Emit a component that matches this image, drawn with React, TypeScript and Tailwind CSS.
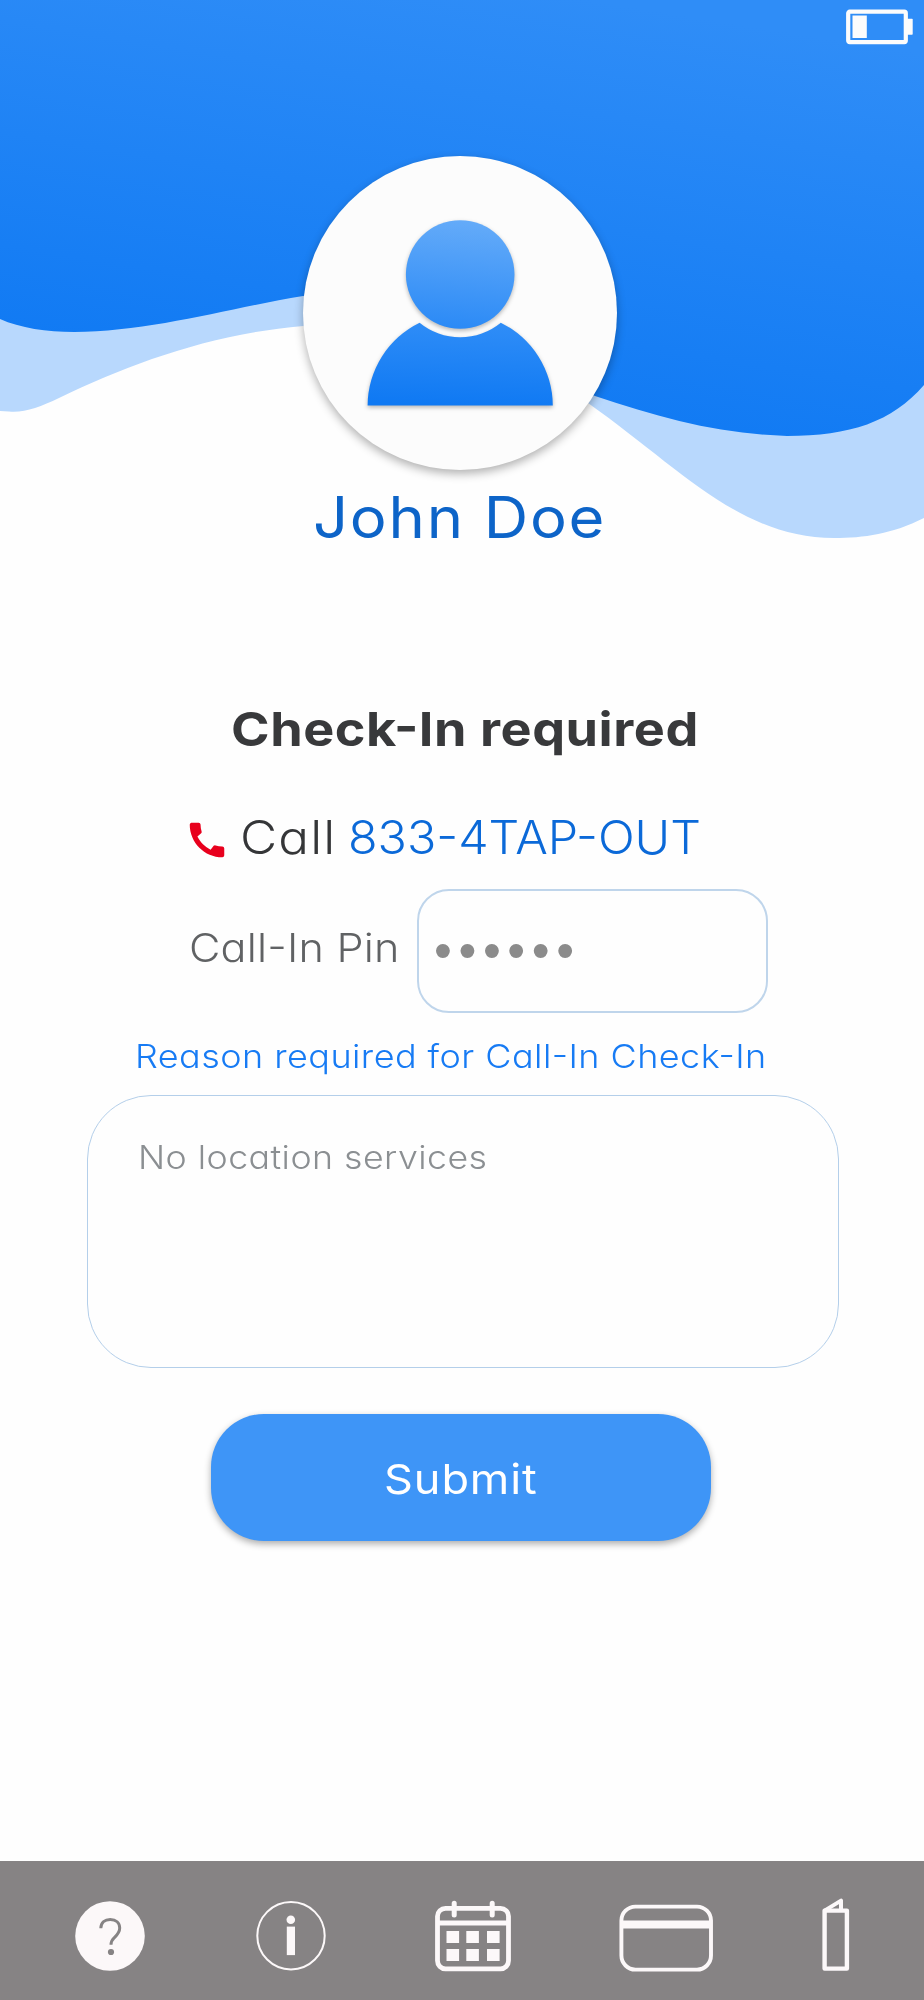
import React from "react";
import { MdCall } from "react-icons/md";

const PIN = "••••••";

function Waves() {
  return (
    <svg className="absolute inset-0 w-full h-full" viewBox="0 0 924 560" fill="none">
      <defs>
        <linearGradient id="wave" x1="500" y1="-14" x2="430" y2="425" gradientUnits="userSpaceOnUse">
          <stop offset="0" stopColor="#2f8df7" />
          <stop offset="1" stopColor="#0f79f3" />
        </linearGradient>
      </defs>
      <path
        d="M0 0H924V518C892 534 864 538 834 538C740 538 680 468 588 403L303 326C210 334 130 364 59 398C40 407 24 413 9 411.5L0 411Z"
        fill="#b8d8fd"
      />
      <path
        d="M0 0H924V385C892 422 850 436 787 436C720 434 660 418 595 396C520 366 430 280 303 296C230 308 150 332 74 332C47 332 20 328 0 319Z"
        fill="url(#wave)"
      />
    </svg>
  );
}

function Battery() {
  return (
    <svg className="absolute left-[846px] top-[9px] w-[67px] h-[36px]" viewBox="0 0 67 36">
      <rect x="2.2" y="2.7" width="57.6" height="30.4" rx="1.5" fill="none" stroke="#fcfcfc" strokeWidth="4.2" />
      <rect x="6.5" y="6.5" width="14.3" height="22.5" fill="#fcfcfc" />
      <path d="M61 9.8h5q.7 0 .7.7v14.6q0 .7-.7.7h-5z" fill="#fcfcfc" />
    </svg>
  );
}

function Avatar() {
  return (
    <div className="relative w-[314px] h-[314px] rounded-full bg-[#fcfcfc] shadow-[0_4px_10px_rgba(0,0,0,0.3)]">
      <svg className="w-full h-full" viewBox="0 0 314 314">
        <defs>
          <linearGradient id="head" x1="0.55" y1="0" x2="0.45" y2="1">
            <stop offset="0" stopColor="#64abf9" />
            <stop offset="1" stopColor="#2b8af6" />
          </linearGradient>
          <linearGradient id="torso" x1="0.55" y1="0" x2="0.45" y2="1">
            <stop offset="0" stopColor="#2f8df7" />
            <stop offset="1" stopColor="#0f79f3" />
          </linearGradient>
        </defs>
        <g className="drop-shadow-[0_2px_2px_rgba(0,0,0,0.28)]">
          <circle cx="157.2" cy="118.5" r="54.3" fill="url(#head)" />
          <path d="M64.6 249.5A92.6 92.6 0 0 1 116.6 166.7A64 64 0 0 0 197.8 166.7A92.6 92.6 0 0 1 249.8 249.5Z" fill="url(#torso)" />
        </g>
      </svg>
    </div>
  );
}

function HelpIcon() {
  return (
    <svg className="w-[70px] h-[70px]" viewBox="0 0 70 70" fill="none">
      <circle cx="35" cy="35" r="34.8" fill="#fcf8f9" />
      <path d="M25.8 27.3C26 21.2 30 18.4 35.2 18.4C41 18.4 44.7 21.8 44.7 27C44.7 31.6 42 34 39.2 36.8C36.8 39.2 36 41 36 43.8" stroke="#868384" strokeWidth="3" />
      <circle cx="36" cy="51" r="3.1" fill="#868384" />
    </svg>
  );
}

function InfoIcon() {
  return (
    <svg className="w-[70px] h-[70px]" viewBox="0 0 70 70" fill="none">
      <circle cx="35" cy="34.7" r="33.7" stroke="#fcf8f9" strokeWidth="2" />
      <circle cx="34.8" cy="18.8" r="4.3" fill="#fcf8f9" />
      <rect x="30.8" y="25.6" width="8.2" height="28.5" fill="#fcf8f9" />
    </svg>
  );
}

function CalendarIcon() {
  return (
    <svg className="w-[76px] h-[72px]" viewBox="0 0 76 72" fill="none" stroke="#fcf8f9">
      <rect x="2.5" y="8.3" width="71" height="60.5" rx="8" strokeWidth="4.8" />
      <path d="M3 23H73" strokeWidth="4.8" />
      <path d="M19.2 3.3V15M57.2 3.3V15" strokeWidth="5" strokeLinecap="round" />
      <g fill="#fcf8f9" stroke="none">
        {[31, 49].map((y) =>
          [11.5, 31.3, 52].map((x) => <rect key={`${x}-${y}`} x={x} y={y} width="12.6" height="12" />)
        )}
      </g>
    </svg>
  );
}

function CardIcon() {
  return (
    <svg className="w-[94px] h-[68px]" viewBox="0 0 94 68" fill="none" stroke="#fcf8f9">
      <rect x="2.4" y="2.6" width="89.6" height="63" rx="14" strokeWidth="3.9" />
      <path d="M2.4 20.6H92" strokeWidth="8" />
    </svg>
  );
}

function BrochureIcon() {
  return (
    <svg className="w-[28px] h-[74px]" viewBox="0 0 28 74" fill="none" stroke="#fcf8f9" strokeWidth="4.4" strokeLinejoin="round">
      <path d="M2.6 12.6H24.9V70.6H2.6Z" />
      <path d="M2.6 12.6L19 2.6V12.6" strokeWidth="4" />
    </svg>
  );
}

export default function App() {
  return (
    <div className="w-[924px] h-[2000px] bg-[#fefefe] flex flex-col overflow-hidden font-['Inter',sans-serif] [font-feature-settings:'cv11','case'] whitespace-nowrap">
      {/* Header */}
      <header className="relative h-[560px] shrink-0 pt-[155.5px] pl-[303px]">
        <Waves />
        <Battery />
        <Avatar />
        <h1 className="relative mt-[8.5px] ml-[10px] w-fit h-20 leading-[80px] text-[57px] tracking-[1.6px] origin-left scale-x-[1.08] text-[#0d64c8]">John Doe</h1>
      </header>

      {/* Check-in form */}
      <main className="flex-1 flex flex-col items-start">
        <h2 className="mt-[139px] ml-[231px] h-[60px] leading-[60px] text-[47px] font-bold tracking-[0.5px] origin-left scale-x-[1.11] text-[#38393b]">Check-In required</h2>

        <div className="mt-12 ml-[184px] h-[60px] flex items-center leading-[60px] text-[46px] font-light">
          <MdCall className="w-[46px] h-[46px] mt-[6px] text-[#e8001d]" />
          <span className="ml-[10px] w-[108px] tracking-[1px] origin-left scale-x-[1.11] text-[#353638]">Call</span>
          <span className="origin-left scale-x-[1.052] text-[#0b69d8]">833-4TAP-OUT</span>
        </div>

        <div className="mt-[22px] ml-[189px] h-[124px] flex items-center">
          <label className="w-[228px] -mt-[5px] text-[39px] font-light tracking-[0.2px] origin-left scale-x-[1.105] text-[#606264]">Call-In Pin</label>
          <div className="w-[351px] h-[124px] rounded-[32px] border-2 border-[#bfd5eb] flex items-center pl-[15px]">
            <span className="-mt-0.5 font-['Liberation_Sans',sans-serif] text-[51px] leading-none tracking-[6.6px] text-[#8b8b8b]">{PIN}</span>
          </div>
        </div>

        <p className="mt-[19px] ml-[135px] h-12 leading-[48px] text-[33px] font-light tracking-[0.4px] origin-left scale-x-[1.091] text-[#177bf4]">Reason required for Call-In Check-In</p>
        <div className="mt-[15px] ml-[87px] w-[752px] h-[273px] rounded-[64px] border-[1.5px] border-[#b4cfea] pt-[38px] pl-[50px]">
          <p className="w-fit h-12 leading-[48px] text-[32.5px] font-light tracking-[0.4px] origin-left scale-x-[1.1] text-[#8b8f92]">No location services</p>
        </div>

        <button className="mt-[46px] ml-[211px] w-[500px] h-[127px] rounded-[53px] bg-[#3e95f7] shadow-[0_3px_7px_rgba(0,0,0,0.32)] text-[41px] font-normal tracking-[0.8px] text-white">
          <span className="inline-block mt-1 scale-x-[1.1]">Submit</span>
        </button>
      </main>

      {/* Bottom bar */}
      <nav className="h-[139px] shrink-0 bg-[#868384] flex items-start">
        <div className="ml-[75px] mt-10"><HelpIcon /></div>
        <div className="ml-[111px] mt-10"><InfoIcon /></div>
        <div className="ml-[109px] mt-[39px]"><CalendarIcon /></div>
        <div className="ml-[108px] mt-[43px]"><CardIcon /></div>
        <div className="ml-[109px] mt-[37px]"><BrochureIcon /></div>
      </nav>
    </div>
  );
}
